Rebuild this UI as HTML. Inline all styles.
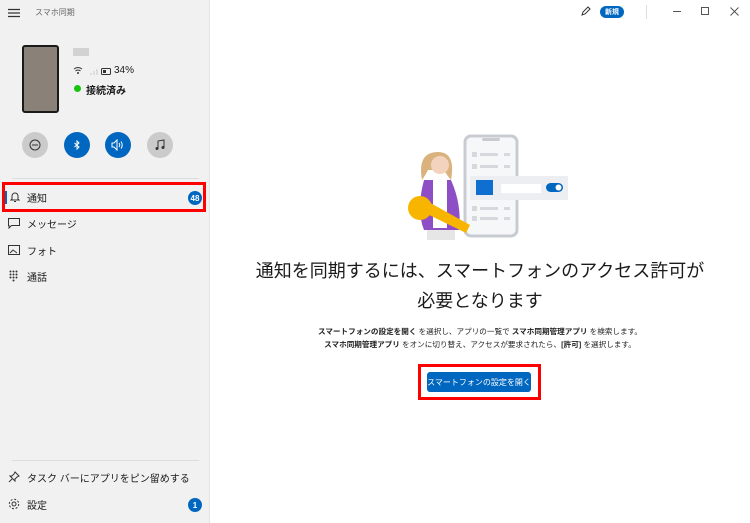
<!DOCTYPE html>
<html><head><meta charset="utf-8"><style>
*{margin:0;padding:0;box-sizing:border-box}
body{width:750px;height:523px;overflow:hidden;background:#fff;font-family:"Liberation Sans","Noto Sans CJK JP",sans-serif;position:relative;color:#1a1a1a}
.a{position:absolute}
#side{position:absolute;left:0;top:0;width:210px;height:523px;background:#f1f1f1;border-right:1px solid #e5e5e5}
.t{font-size:10px;white-space:nowrap}
.c{position:absolute;width:26px;height:26px;border-radius:50%;display:flex;align-items:center;justify-content:center}
.g{background:#cbcbcb}.b{background:#0067c0}
.badge{position:absolute;width:14px;height:14px;border-radius:50%;background:#0067c0;color:#fff;font-size:8px;font-weight:bold;display:flex;align-items:center;justify-content:center}
</style></head><body>
<div id="side">
 <svg class="a" style="left:8px;top:8px" width="12" height="10"><path d="M0 1.5H12M0 5H12M0 8.5H12" stroke="#333" stroke-width="1.2"/></svg>
 <div class="a" style="left:35px;top:7px;font-size:8px;color:#666">スマホ同期</div>
 <div class="a" style="left:22px;top:45px;width:37px;height:68px;background:#8a8279;border:2px solid #1a1a1a;border-radius:3px"></div>
 <div class="a" style="left:73px;top:48px;width:16px;height:8px;background:#c5c5c5;opacity:.7"></div>
 <svg class="a" style="left:73px;top:66px" width="40" height="10"><path d="M1 3Q5 0 9 3M2.5 5Q5 3 7.5 5" stroke="#333" fill="none"/><circle cx="5" cy="7" r="1" fill="#333"/><path d="M17 9h2v-2h-2zM20 9h2v-4h-2zM23 9h2v-6h-2z" fill="#ddd"/><rect x="28.5" y="2.5" width="9" height="6" rx="1" fill="none" stroke="#333"/><rect x="30" y="4" width="3" height="3" fill="#333"/></svg>
 <div class="a t" style="left:114px;top:65px;font-size:10px">34%</div>
 <div class="a" style="left:74px;top:85px;width:7px;height:7px;border-radius:50%;background:#16c60c"></div>
 <div class="a t" style="left:86px;top:82px;font-weight:bold;font-size:10px">接続済み</div>
 <div class="c g" style="left:22px;top:132px"><svg width="12" height="12"><circle cx="6" cy="6" r="5" fill="none" stroke="#333"/><path d="M3 6H9" stroke="#333"/></svg></div>
 <div class="c b" style="left:64px;top:132px"><svg width="8" height="10"><path d="M1.5 3L6 7 4 9V1L6 3 1.5 7" stroke="#fff" fill="none"/></svg></div>
 <div class="c b" style="left:105px;top:132px"><svg width="14" height="12"><path d="M1 4h2l3-3v10L3 8H1z" fill="none" stroke="#fff"/><path d="M8 4Q9.5 6 8 8M10 2.5Q12.5 6 10 9.5" fill="none" stroke="#fff"/></svg></div>
 <div class="c g" style="left:147px;top:132px"><svg width="12" height="12"><path d="M4 9V2l6-1v7" fill="none" stroke="#333"/><circle cx="3" cy="9.5" r="1.5" fill="#333"/><circle cx="9" cy="8.5" r="1.5" fill="#333"/></svg></div>
 <div class="a" style="left:12px;top:178px;width:187px;height:1px;background:#ddd"></div>
 <div class="a" style="left:2px;top:182px;width:204px;height:30px;border:3px solid #f00"></div>
 <div class="a" style="left:5px;top:191px;width:2px;height:13px;background:#0067c0"></div>
 <svg class="a" style="left:10px;top:191px" width="10" height="12"><path d="M2 8V5a3 3 0 016 0v3l1 1H1zM4 10.5h2" fill="none" stroke="#333"/></svg>
 <div class="a t" style="left:27px;top:190px">通知</div>
 <div class="badge" style="left:188px;top:191px">48</div>
 <svg class="a" style="left:8px;top:218px" width="12" height="11"><path d="M.5.5h11v7h-8l-2.5 2.5v-2.5h-.5z" fill="none" stroke="#333"/></svg>
 <div class="a t" style="left:27px;top:216px">メッセージ</div>
 <svg class="a" style="left:8px;top:245px" width="12" height="10"><rect x=".5" y=".5" width="11" height="9" fill="none" stroke="#333"/><path d="M2 8l3-3 4 3" fill="none" stroke="#333"/></svg>
 <div class="a t" style="left:27px;top:243px">フォト</div>
 <svg class="a" style="left:9px;top:270px" width="9" height="12" fill="#333"><circle cx="1.5" cy="1.5" r="1"/><circle cx="4.5" cy="1.5" r="1"/><circle cx="7.5" cy="1.5" r="1"/><circle cx="1.5" cy="4.5" r="1"/><circle cx="4.5" cy="4.5" r="1"/><circle cx="7.5" cy="4.5" r="1"/><circle cx="1.5" cy="7.5" r="1"/><circle cx="4.5" cy="7.5" r="1"/><circle cx="7.5" cy="7.5" r="1"/><circle cx="4.5" cy="10.5" r="1"/></svg>
 <div class="a t" style="left:27px;top:269px">通話</div>
 <div class="a" style="left:12px;top:460px;width:187px;height:1px;background:#ddd"></div>
 <svg class="a" style="left:8px;top:471px" width="12" height="12"><path d="M7 1l4 4-2 1-2 2 0 2-5-5 2 0 2-2zM4 8l-3 3" fill="none" stroke="#333"/></svg>
 <div class="a t" style="left:27px;top:470px">タスク バーにアプリをピン留めする</div>
 <svg class="a" style="left:8px;top:498px" width="12" height="12"><circle cx="6" cy="6" r="2" fill="none" stroke="#333"/><circle cx="6" cy="6" r="4.7" fill="none" stroke="#333" stroke-dasharray="2 1.7"/></svg>
 <div class="a t" style="left:27px;top:497px">設定</div>
 <div class="badge" style="left:188px;top:498px">1</div>
</div>
<svg class="a" style="left:580px;top:6px" width="11" height="11"><path d="M2 9l1-3 5-5 2 2-5 5z" fill="none" stroke="#333"/></svg>
<div class="a" style="left:600px;top:6px;width:24px;height:12px;border-radius:6px;background:#0067c0;color:#fff;font-size:7px;font-weight:bold;display:flex;align-items:center;justify-content:center">新規</div>
<div class="a" style="left:646px;top:5px;width:1px;height:14px;background:#ddd"></div>
<div class="a" style="left:673px;top:11px;width:8px;height:1px;background:#555"></div>
<div class="a" style="left:701px;top:7px;width:8px;height:8px;border:1px solid #555"></div>
<svg class="a" style="left:730px;top:7px" width="9" height="9"><path d="M.5.5l8 8M8.5.5l-8 8" stroke="#555"/></svg>
<svg class="a" style="left:380px;top:120px" width="220" height="130">
 <rect x="85" y="16" width="52" height="100" rx="6" fill="#f6f7f9" stroke="#c8ccd2" stroke-width="3"/>
 <rect x="102" y="18" width="18" height="3" rx="1.5" fill="#c8ccd2"/>
 <g fill="#d5d8dd"><rect x="92" y="32" width="5" height="5"/><rect x="100" y="33" width="18" height="3"/><rect x="124" y="33" width="6" height="3"/><rect x="92" y="44" width="5" height="5"/><rect x="100" y="45" width="18" height="3"/><rect x="124" y="45" width="6" height="3"/><rect x="92" y="86" width="5" height="5"/><rect x="100" y="87" width="18" height="3"/><rect x="124" y="87" width="6" height="3"/><rect x="92" y="96" width="5" height="5"/><rect x="100" y="97" width="18" height="3"/><rect x="124" y="97" width="6" height="3"/></g>
 <rect x="90" y="56" width="98" height="24" fill="#eceef1"/>
 <rect x="96" y="60" width="17" height="15" fill="#0e6fd0"/>
 <rect x="121" y="64" width="40" height="9" fill="#fff"/>
 <rect x="166" y="63" width="17" height="9" rx="4.5" fill="#0067c0"/><circle cx="178.5" cy="67.5" r="3" fill="#fff"/>
 <path d="M44 60q-8 30 0 50h35q3-25-8-50z" fill="#8e4ec6"/>
 <rect x="53" y="58" width="14" height="50" fill="#fff"/>
 <path d="M42 60q-5-28 16-28q18 0 13 28q-5-6-7-10h-16q-2 4-6 10z" fill="#d9b27e"/>
 <circle cx="60" cy="45" r="9" fill="#f3d3bd"/>
 <circle cx="40" cy="88" r="12" fill="#f7b500"/>
 <path d="M45 80l45 25-4 8-45-22z" fill="#f7b500"/>
 <rect x="47" y="110" width="28" height="10" fill="#e6e6e6"/>
</svg>
<div class="a" style="left:210px;top:256px;width:540px;text-align:center;font-size:18px;line-height:30px;color:#1a1a1a">通知を同期するには、スマートフォンのアクセス許可が<br>必要となります</div>
<div class="a" style="left:210px;top:325px;width:540px;text-align:center;font-size:7.6px;line-height:13px;color:#222"><b>スマートフォンの設定を開く</b> を選択し、アプリの一覧で <b>スマホ同期管理アプリ</b> を検索します。<br><b>スマホ同期管理アプリ</b> をオンに切り替え、アクセスが要求されたら、<b>[許可]</b> を選択します。</div>
<div class="a" style="left:418px;top:364px;width:123px;height:36px;border:3px solid #f00"></div>
<div class="a" style="left:427px;top:372px;width:104px;height:20px;background:#0067c0;border-radius:3px;color:#fff;font-size:8px;white-space:nowrap;display:flex;align-items:center;justify-content:center">スマートフォンの設定を開く</div>
</body></html>
